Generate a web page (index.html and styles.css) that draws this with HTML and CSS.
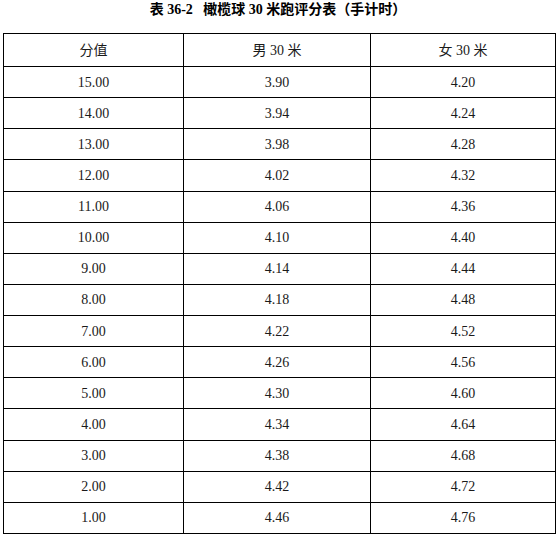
FILE: index.html
```html
<!DOCTYPE html>
<html lang="zh">
<head>
<meta charset="utf-8">
<link rel="stylesheet" href="styles.css">
</head>
<body>
<div class="page">
  <h1 class="title">表 36-2&nbsp;&nbsp;&nbsp;橄榄球 30 米跑评分表（手计时）</h1>
  <table class="score">
    <colgroup><col class="c1"><col class="c2"><col class="c3"></colgroup>
    <thead>
      <tr class="head"><th>分值</th><th>男 30 米</th><th>女 30 米</th></tr>
    </thead>
    <tbody>
      <tr><td>15.00</td><td>3.90</td><td>4.20</td></tr>
      <tr><td>14.00</td><td>3.94</td><td>4.24</td></tr>
      <tr><td>13.00</td><td>3.98</td><td>4.28</td></tr>
      <tr><td>12.00</td><td>4.02</td><td>4.32</td></tr>
      <tr><td>11.00</td><td>4.06</td><td>4.36</td></tr>
      <tr><td>10.00</td><td>4.10</td><td>4.40</td></tr>
      <tr><td>9.00</td><td>4.14</td><td>4.44</td></tr>
      <tr><td>8.00</td><td>4.18</td><td>4.48</td></tr>
      <tr><td>7.00</td><td>4.22</td><td>4.52</td></tr>
      <tr><td>6.00</td><td>4.26</td><td>4.56</td></tr>
      <tr><td>5.00</td><td>4.30</td><td>4.60</td></tr>
      <tr><td>4.00</td><td>4.34</td><td>4.64</td></tr>
      <tr><td>3.00</td><td>4.38</td><td>4.68</td></tr>
      <tr><td>2.00</td><td>4.42</td><td>4.72</td></tr>
      <tr><td>1.00</td><td>4.46</td><td>4.76</td></tr>
    </tbody>
  </table>
</div>
</body>
</html>
```

FILE: styles.css
```css
html, body {
  margin: 0;
  padding: 0;
  background: #fff;
}
.page {
  padding: 0 3px;
  font-family: "Liberation Serif", "Noto Sans CJK SC", serif;
  color: #1a1a1a;
}
.title {
  margin: 0;
  height: 33px;
  padding-top: 2px;
  box-sizing: border-box;
  font-size: 14px;
  font-weight: bold;
  line-height: 16px;
  text-align: center;
  color: #000;
  padding-right: 2px;
}
.score {
  width: 552px;
  border-collapse: collapse;
  table-layout: fixed;
  border: 1px solid #000;
}
.c1 { width: 180px; }
.c2 { width: 187px; }
.c3 { width: 185px; }
.score th, .score td {
  border: 1px solid #000;
  padding: 0;
  text-align: center;
  font-size: 14px;
  font-weight: normal;
  height: 30.13px;
  line-height: 15px;
}
.score .head th {
  height: 32px;
  font-size: 14px;
}
```
